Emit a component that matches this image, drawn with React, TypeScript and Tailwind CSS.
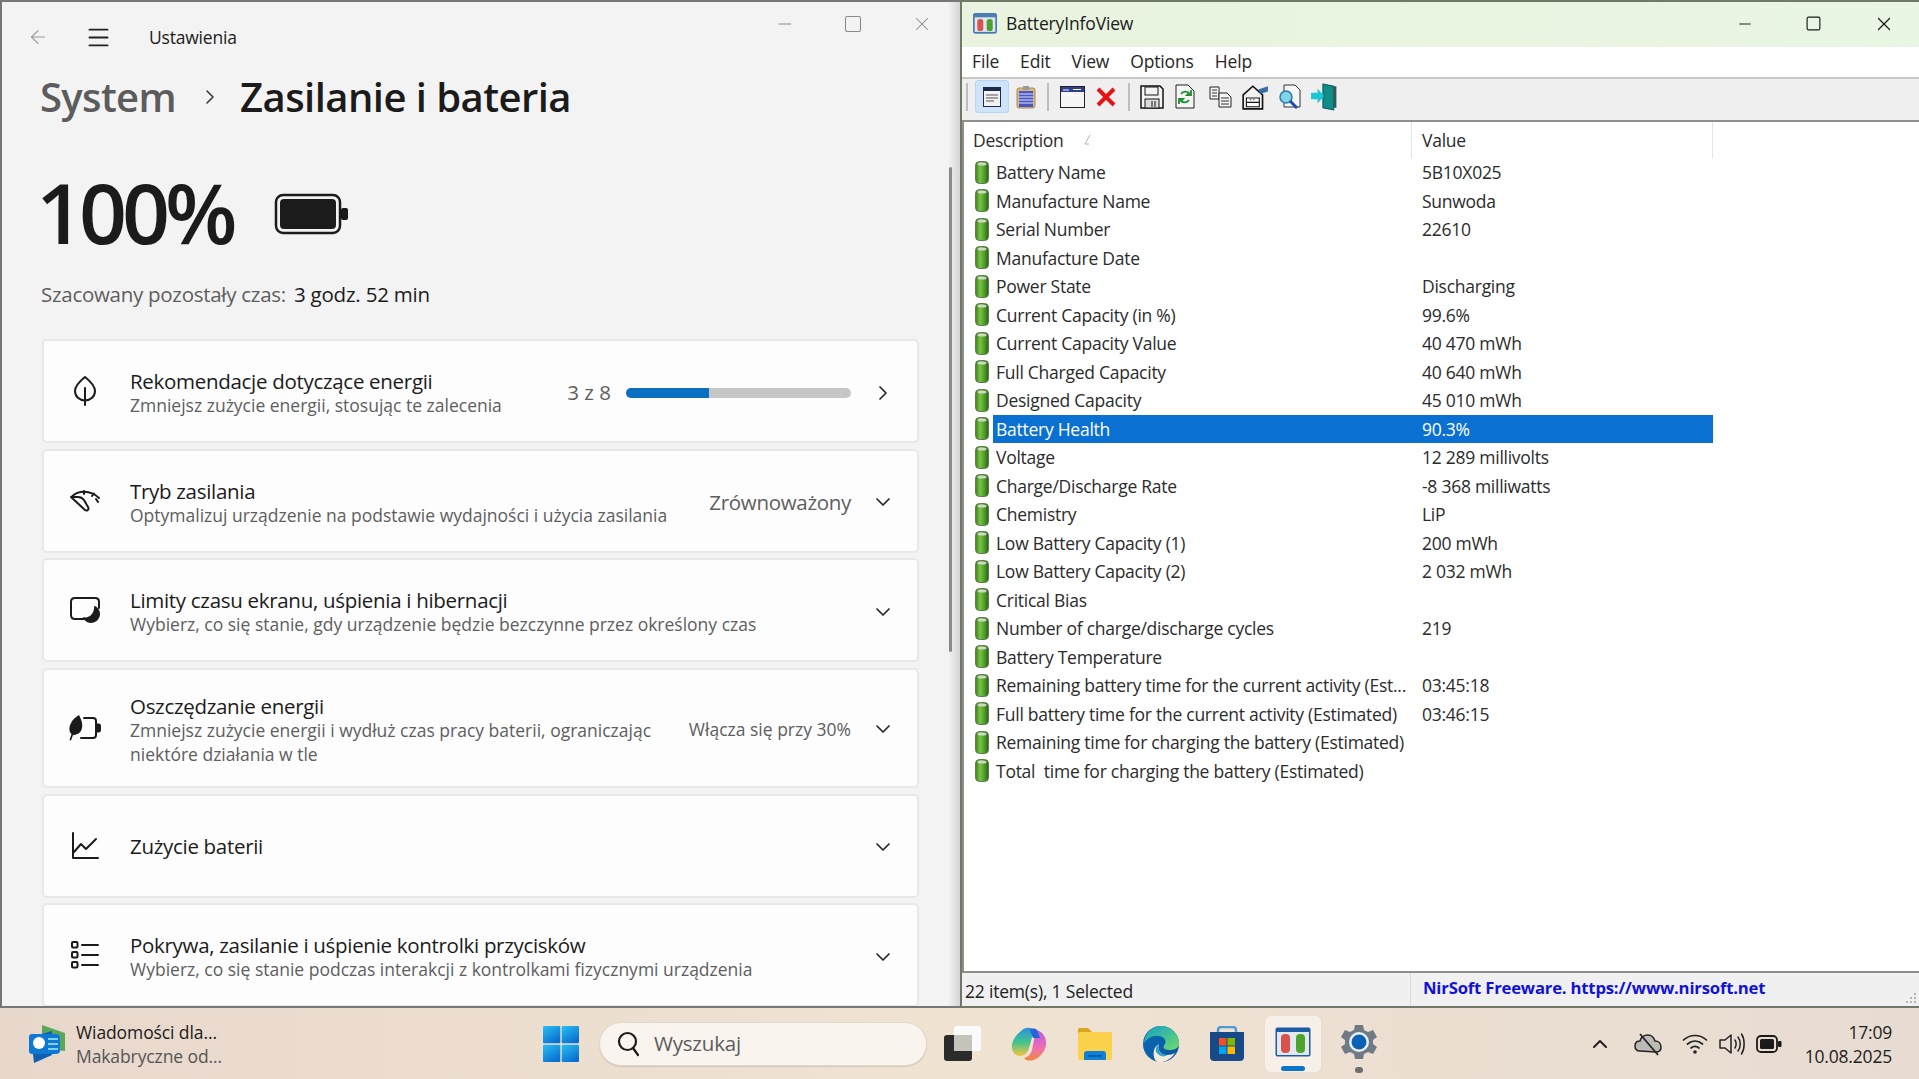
import React from "react";
import { ChevronDown, ChevronRight, ChevronUp, ArrowLeft, Menu, Minus, Square, X } from "lucide-react";

const rows: [string, string][] = [
  ["Battery Name", "5B10X025"],
  ["Manufacture Name", "Sunwoda"],
  ["Serial Number", "22610"],
  ["Manufacture Date", ""],
  ["Power State", "Discharging"],
  ["Current Capacity (in %)", "99.6%"],
  ["Current Capacity Value", "40 470 mWh"],
  ["Full Charged Capacity", "40 640 mWh"],
  ["Designed Capacity", "45 010 mWh"],
  ["Battery Health", "90.3%"],
  ["Voltage", "12 289 millivolts"],
  ["Charge/Discharge Rate", "-8 368 milliwatts"],
  ["Chemistry", "LiP"],
  ["Low Battery Capacity (1)", "200 mWh"],
  ["Low Battery Capacity (2)", "2 032 mWh"],
  ["Critical Bias", ""],
  ["Number of charge/discharge cycles", "219"],
  ["Battery Temperature", ""],
  ["Remaining battery time for the current activity (Est...", "03:45:18"],
  ["Full battery time for the current activity (Estimated)", "03:46:15"],
  ["Remaining time for charging the battery (Estimated)", ""],
  ["Total  time for charging the battery (Estimated)", ""],
];

function GreenCell() {
  return (
    <svg width="16" height="25" viewBox="0 0 16 24">
      <defs>
        <linearGradient id="gc" x1="0" x2="1" y1="0" y2="0">
          <stop offset="0" stopColor="#3d7d1e" />
          <stop offset="0.35" stopColor="#79c441" />
          <stop offset="0.7" stopColor="#4c9a28" />
          <stop offset="1" stopColor="#2c5f18" />
        </linearGradient>
      </defs>
      <rect x="1.5" y="1" width="13" height="22" rx="4" fill="url(#gc)" stroke="#5e7d52" strokeWidth="1" />
      <ellipse cx="8" cy="3.5" rx="4.5" ry="1.6" fill="#cfd8c8" />
    </svg>
  );
}

function Leaf() {
  return (
    <svg width="26" height="32" viewBox="0 0 26 32" fill="none" stroke="#1b1b1b" strokeWidth="2" strokeLinecap="round">
      <path d="M13 2C8 6 3 10.500 3 16C3 21.500 7.500 25.500 13 25.500C18.500 25.500 23 21.500 23 16C23 10.500 18 6 13 2Z" />
      <path d="M13 13V30" />
    </svg>
  );
}
function Gauge() {
  return (
    <svg width="32" height="24" viewBox="0 0 32 24" fill="none" stroke="#1b1b1b" strokeWidth="2" strokeLinecap="round">
      <path d="M3 7.500C9 1.500 21 0.500 30 9" />
      <path d="M15 2V5M25 4.500L23 7M29 13L27 10" />
      <path d="M2 8L16 21C18 22.500 20.500 20.500 19 18L15 11C13.500 9 11 8 9 8Z" strokeLinejoin="round" />
    </svg>
  );
}
function ScreenMoon() {
  return (
    <svg width="32" height="28" viewBox="0 0 32 28" fill="none">
      <path d="M15 23H6C3.500 23 2 21.500 2 19V6C2 3.500 3.500 2 6 2H26C28.500 2 30 3.500 30 6V12" stroke="#1b1b1b" strokeWidth="2" strokeLinecap="round" />
      <path d="M25 10C28 10 31 14 31 18C31 23 26.500 27 22 27C18 27 15 24 14 21C20 23 26 17 25 10Z" fill="#1b1b1b" />
    </svg>
  );
}
function Saver() {
  return (
    <svg width="32" height="26" viewBox="0 0 32 26" fill="none">
      <path d="M15 3H24C26 3 27 4 27 6V20C27 22 26 23 24 23H12" stroke="#1b1b1b" strokeWidth="2" strokeLinecap="round" />
      <path d="M27.500 8.500H30C31 8.500 32 9.500 32 11V15C32 16.500 31 17.500 30 17.500H27.500Z" fill="#1b1b1b" />
      <path d="M10 0C12 4 14 8 13 13C12 18 8 20 4 20L2 25.500L0.500 25L2.500 19C-0.500 16 0 12 2 8C4 4 7 2 10 0Z" fill="#1b1b1b" />
    </svg>
  );
}
function ChartIcon() {
  return (
    <svg width="30" height="28" viewBox="0 0 30 28" fill="none" stroke="#1b1b1b" strokeWidth="2" strokeLinecap="round" strokeLinejoin="round">
      <path d="M3 1V26H28" />
      <path d="M4 20L11 12L16 17L26 7" />
    </svg>
  );
}
function ListIcon() {
  return (
    <svg width="30" height="28" viewBox="0 0 30 28" fill="none" stroke="#1b1b1b" strokeWidth="2" strokeLinecap="round">
      <rect x="2" y="1" width="5.500" height="5.500" rx="1" />
      <rect x="2" y="11" width="5.500" height="5.500" rx="1" />
      <rect x="2" y="21" width="5.500" height="5.500" rx="1" />
      <path d="M12 4H28M12 14H28M12 24H28" />
    </svg>
  );
}

function Card({ icon, title, sub, right, h = "h-[104px]" }: { icon: React.ReactNode; title: string; sub?: React.ReactNode; right?: React.ReactNode; h?: string }) {
  return (
    <div className={`${h} shrink-0 w-[877px] rounded-[5px] bg-[#fdfdfd] border-2 border-[#e8e8e8] flex items-center`}>
      <div className="w-[86px] shrink-0 flex justify-center pr-[5px]">{icon}</div>
      <div className={`flex-1 min-w-0 ${sub ? "pt-[5px]" : ""}`}>
        <div className="text-[20.5px] leading-[24px] text-[#1b1b1b] tracking-[-0.3px] whitespace-nowrap">{title}</div>
        {sub && <div className="text-[17.5px] leading-[24.500px] text-[#5e5e5e] tracking-[0px] whitespace-nowrap">{sub}</div>}
      </div>
      <div className="flex items-center shrink-0 pt-[3px]">{right}</div>
    </div>
  );
}

function Chev({ right = false }: { right?: boolean }) {
  const C = right ? ChevronRight : ChevronDown;
  return (
    <div className="w-[66px] shrink-0 flex justify-center pr-[2px]">
      <C size={24} strokeWidth={1.7} className="text-[#262626]" />
    </div>
  );
}

function SettingsWindow() {
  return (
    <div className="relative w-[960px] h-full shrink-0 bg-[#f3f3f3] border-t-2 border-l-2 border-b-2 border-[#777777] overflow-hidden">
      <div className="absolute right-0 top-0 bottom-0 w-[12px] bg-gradient-to-r from-[#f3f3f3] to-[#d5d5d5]" />
      <div className="absolute left-[947px] top-[165px] w-[3px] h-[485px] rounded-full bg-[#8a8a8a]" />

      <div className="relative h-[64px] pt-[6px] flex items-center text-[#1b1b1b]">
        <ArrowLeft size={22} strokeWidth={1.3} className="text-[#9a9a9a] ml-[25px]" />
        <Menu size={27} strokeWidth={1.7} className="text-[#222222] ml-[35.5px]" />
        <div className="text-[17.5px] tracking-[-0.2px] ml-[37.5px]">Ustawienia</div>
        <div className="ml-auto mr-[27px] mt-[-26px] flex items-center gap-[48px] text-[#8b8b8b]">
          <Minus size={20} strokeWidth={1.2} />
          <Square size={20} strokeWidth={1.3} />
          <X size={22} strokeWidth={1.1} />
        </div>
      </div>

      <div className="relative pl-[38px] h-[64px] pb-[2px] flex items-center">
        <span className="text-[40px] leading-[56px] font-semibold tracking-[-0.65px] text-[#5c5c5c]">System</span>
        <ChevronRight size={24} strokeWidth={1.6} className="text-[#3b3b3b] ml-[22px] mr-[18px]" />
        <span className="text-[40px] leading-[56px] font-semibold tracking-[-0.55px] text-[#1b1b1b]">Zasilanie i bateria</span>
      </div>

      <div className="relative pl-[34px] h-[110px] mt-[27px] flex items-center">
        <span className="text-[84px] leading-[110px] font-semibold tracking-[-5px] text-[#1b1b1b]">100%</span>
        <svg className="ml-[41px] mt-[4px]" width="76" height="42" viewBox="0 0 76 42">
          <rect x="2" y="2" width="64" height="38" rx="7" fill="none" stroke="#1b1b1b" strokeWidth="2.500" />
          <rect x="6" y="6" width="56" height="30" rx="4" fill="#1b1b1b" />
          <rect x="67" y="15" width="7" height="12" rx="2" fill="#1b1b1b" />
        </svg>
      </div>

      <div className="relative pl-[39px] mt-[11px] h-[32px] flex items-center text-[20.5px] tracking-[-0.2px] whitespace-nowrap">
        <span className="text-[#5e5e5e] tracking-[-0.28px]">Szacowany pozostały czas:</span>
        <span className="text-[#1b1b1b] ml-[8px]">3 godz. 52 min</span>
      </div>

      <div className="relative ml-[40px] mt-[29px] flex flex-col gap-[5.500px]">
        <Card
          icon={<Leaf />}
          title="Rekomendacje dotyczące energii"
          sub="Zmniejsz zużycie energii, stosując te zalecenia"
          right={
            <>
              <span className="text-[20.5px] text-[#5e5e5e] mr-[15px]">3 z 8</span>
              <div className="w-[225px] h-[10px] rounded-full bg-[#c6c6c6] overflow-hidden">
                <div className="w-[83px] h-full bg-[#0b6fc2]" />
              </div>
              <Chev right />
            </>
          }
        />
        <Card
          icon={<Gauge />}
          title="Tryb zasilania"
          sub="Optymalizuj urządzenie na podstawie wydajności i użycia zasilania"
          right={
            <>
              <span className="text-[20.5px] text-[#5e5e5e] tracking-[-0.3px]">Zrównoważony</span>
              <Chev />
            </>
          }
        />
        <Card icon={<ScreenMoon />} title="Limity czasu ekranu, uśpienia i hibernacji" sub="Wybierz, co się stanie, gdy urządzenie będzie bezczynne przez określony czas" right={<Chev />} />
        <Card
          h="h-[120.500px]"
          icon={<Saver />}
          title="Oszczędzanie energii"
          sub={<>Zmniejsz zużycie energii i wydłuż czas pracy baterii, ograniczając<br />niektóre działania w tle</>}
          right={
            <>
              <span className="text-[17.5px] text-[#5e5e5e] tracking-[0px]">Włącza się przy 30%</span>
              <Chev />
            </>
          }
        />
        <Card icon={<ChartIcon />} title="Zużycie baterii" right={<Chev />} />
        <Card icon={<ListIcon />} title="Pokrywa, zasilanie i uśpienie kontrolki przycisków" sub="Wybierz, co się stanie podczas interakcji z kontrolkami fizycznymi urządzenia" right={<Chev />} />
      </div>
    </div>
  );
}

function AppIcon({ size = 24 }: { size?: number }) {
  return (
    <svg width={size} height={size * 0.86} viewBox="0 0 28 24">
      <rect x="0.500" y="0.500" width="27" height="23" rx="2" fill="#4b7fb5" stroke="#3a6ea8" />
      <rect x="2" y="5" width="24" height="17" fill="#dfe6ee" />
      <rect x="5" y="7" width="7" height="14" rx="3" fill="#d9534f" />
      <rect x="16" y="7" width="7" height="14" rx="3" fill="#4fa02f" />
    </svg>
  );
}

function Toolbar() {
  return (
    <div className="h-[41px] bg-[#efefef] flex items-center shrink-0 pl-[3px] pb-[6px]">
      <div className="w-[2px] h-[28px] bg-[#bdbdbd] ml-[1px]" />
      <div className="w-[34px] h-[33px] ml-[7px] rounded-[3px] bg-[#cfe4f8] border border-[#b6d6f3] flex items-center justify-center">
        <svg width="18" height="20" viewBox="0 0 18 20"><rect x="0.500" y="0.500" width="17" height="19" fill="#f2f2f2" stroke="#1d2b4a" /><rect x="1" y="1" width="16" height="3" fill="#1d2b4a" /><path d="M3 8H15M3 11H15M3 14H11" stroke="#555" /></svg>
      </div>
      <div className="w-[33px] flex justify-center">
        <svg width="20" height="24" viewBox="0 0 20 24"><rect x="1" y="3" width="18" height="20" rx="2" fill="#d7b77e" stroke="#a98c55" /><rect x="3" y="6" width="14" height="16" fill="#4a56c6" /><path d="M3 9H17M3 12H17M3 15H17M3 18H17" stroke="#dfe3fb" /><rect x="7" y="1" width="6" height="4" fill="#9a9a9a" /></svg>
      </div>
      <div className="w-[2px] h-[28px] bg-[#bdbdbd] ml-[5px]" />
      <div className="w-[46px] flex justify-center">
        <svg width="25" height="22" viewBox="0 0 25 22"><rect x="0.500" y="0.500" width="24" height="21" fill="#f5f5f5" stroke="#222" /><rect x="1" y="1" width="23" height="5" fill="#2d3f8f" /><path d="M3 4H9M13 3.500H21M3 9H21" stroke="#fff" /></svg>
      </div>
      <div className="w-[22px] flex justify-center">
        <svg width="22" height="22" viewBox="0 0 22 22" className="shrink-0"><path d="M3 3L19 19M19 3L3 19" stroke="#e41414" strokeWidth="4" /></svg>
      </div>
      <div className="w-[2px] h-[28px] bg-[#bdbdbd] ml-[11px]" />
      <div className="w-[44px] flex justify-center">
        <svg width="24" height="24" viewBox="0 0 24 24"><path d="M1 1H20L23 4V23H1Z" fill="#f3f3f3" stroke="#151515" strokeWidth="1.500" /><rect x="5" y="2" width="13" height="8" fill="#f3f3f3" stroke="#151515" /><rect x="5" y="14" width="14" height="9" fill="#dcdcdc" stroke="#151515" /><path d="M12 16V22M15 16V22" stroke="#151515" /></svg>
      </div>
      <div className="w-[22px] flex justify-center">
        <svg width="20" height="25" viewBox="0 0 20 25" className="shrink-0"><path d="M1 1H13L19 7V24H1Z" fill="#f6f6f6" stroke="#222" /><path d="M6 10C8 7 12 7 14 9L12 11H16V6M14 16C12 19 8 19 6 17L8 15H4V20" stroke="#1f8f2c" strokeWidth="1.800" fill="none" /></svg>
      </div>
      <div className="w-[50px] flex justify-center">
        <svg width="24" height="22" viewBox="0 0 24 22" className="shrink-0"><path d="M1 1H10V13H1Z" fill="#f5f5f5" stroke="#222" /><path d="M3 4H8M3 7H8M3 10H8" stroke="#333" /><path d="M10 7H18L22 11V21H10Z" fill="#f5f5f5" stroke="#222" /><path d="M12 12H20M12 15H20M12 18H20" stroke="#333" /></svg>
      </div>
      <div className="w-[18px] flex justify-center">
        <svg width="28" height="26" viewBox="0 0 26 24" className="shrink-0"><path d="M2 10L11 2L20 10V23H2Z" fill="#f2f2f2" stroke="#111" strokeWidth="1.500" /><path d="M5 13H17V21H5Z" fill="#fff" stroke="#111" /><path d="M5 17H17M9 14V15M12 14V15" stroke="#111" /><path d="M16 5L25 2V7L18 9Z" fill="#3a6ea8" /></svg>
      </div>
      <div className="w-[52px] flex justify-center">
        <svg width="24" height="26" viewBox="0 0 24 26" className="shrink-0"><path d="M6 1H17L22 6V23H6Z" fill="#f6f6f6" stroke="#333" /><circle cx="8" cy="13" r="6" fill="#7fd4ea" stroke="#2a7aa8" strokeWidth="1.500" /><path d="M12 17L19 24" stroke="#2249b0" strokeWidth="3" /></svg>
      </div>
      <div className="w-[16px] flex justify-center">
        <svg width="28" height="28" viewBox="0 0 26 26" className="shrink-0"><path d="M12 1L22 3V25L12 23Z" fill="#0f8d8a" stroke="#0b5c5a" /><rect x="22" y="3" width="2.500" height="20" fill="#2d5c5a" /><path d="M1 9H7V5L13 12L7 19V15H1Z" fill="#19c7d6" /></svg>
      </div>
    </div>
  );
}

function BatteryWindow() {
  return (
    <div className="flex-1 min-w-0 h-full border-t-2 border-l-2 border-b-2 border-[#707868] flex flex-col">
      <div className="h-[45px] shrink-0 bg-gradient-to-r from-[#e9f3df] to-[#e9f6e3] flex items-center text-[#1b1b1b] pb-[2px]">
        <div className="ml-[11px]"><AppIcon size={24} /></div>
        <div className="ml-[9px] text-[17.5px] tracking-[-0.15px]">BatteryInfoView</div>
        <div className="ml-auto flex items-center mr-[24px] gap-[51px]">
          <Minus size={18} strokeWidth={1.3} />
          <Square size={17} strokeWidth={1.6} />
          <X size={22} strokeWidth={1.3} />
        </div>
      </div>
      <div className="h-[30px] shrink-0 bg-white flex items-center pl-[10px] pb-[2px] text-[17.5px] text-[#262626] gap-[21px] tracking-[-0.15px]">
        <span>File</span><span>Edit</span><span>View</span><span>Options</span><span>Help</span>
      </div>
      <div className="h-[2px] shrink-0 bg-[#c9c9c9]" />
      <Toolbar />
      <div className="h-[2px] shrink-0 bg-[#8e8e8e]" />
      <div className="flex-1 min-h-0 bg-white border-l-2 border-[#8e8e8e] text-[17.5px] text-[#2b2b2b] tracking-[-0.26px] overflow-hidden">
        <div className="h-[36px] flex">
          <div className="w-[448px] flex items-center pl-[9px] border-r border-[#e4e4e4] relative">
            Description
            <svg className="ml-[18px]" width="10" height="12" viewBox="0 0 10 12"><path d="M8 1L3 10H7" stroke="#b5b5b5" fill="none" /></svg>
          </div>
          <div className="w-[301px] flex items-center pl-[10px] border-r border-[#e4e4e4]">Value</div>
        </div>
        {rows.map(([d, v], i) => {
          const selected = i === 9;
          return (
            <div key={d} className="h-[28.500px] flex items-center w-[749px]">
              <div className="w-[29px] pl-[10px] flex items-center shrink-0"><GreenCell /></div>
              <div className={`flex items-center h-full flex-1 ${selected ? "bg-[#0a70d2] text-white" : ""}`}>
                <div className="w-[419px] pl-[3px] whitespace-pre shrink-0">{d}</div>
                <div className="pl-[10px] whitespace-pre">{v}</div>
              </div>
            </div>
          );
        })}
      </div>
      <div className="h-[2px] shrink-0 bg-[#8e8e8e]" />
      <div className="h-[33px] shrink-0 bg-[#f0f0f0] flex items-center relative">
        <div className="w-[449px] pl-[3px] pt-[3px] text-[17.5px] tracking-[-0.2px] text-[#222222] border-r border-[#dcdcdc] h-full flex items-center">22 item(s), 1 Selected</div>
        <div className="pl-[12px] mb-[4px] text-[16.7px] font-bold text-[#1212d8] tracking-[-0.2px]">NirSoft Freeware. https://www.nirsoft.net</div>
        <svg className="absolute right-[2px] bottom-[2px]" width="12" height="12" viewBox="0 0 12 12" fill="#b5b5b5"><rect x="9" y="1" width="2" height="2" /><rect x="5" y="5" width="2" height="2" /><rect x="9" y="5" width="2" height="2" /><rect x="1" y="9" width="2" height="2" /><rect x="5" y="9" width="2" height="2" /><rect x="9" y="9" width="2" height="2" /></svg>
      </div>
    </div>
  );
}

function Slot({ children, active, dot }: { children: React.ReactNode; active?: boolean; dot?: boolean }) {
  return (
    <div className="relative w-[66px] h-full flex items-center justify-center">
      {active && <div className="absolute left-[5px] right-[5px] top-[8px] bottom-[7px] rounded-[6px] bg-[#f7f0e8]" />}
      {active && <div className="absolute left-[21px] right-[21px] bottom-[8px] h-[5px] rounded-full bg-[#0a74cc]" />}
      {dot && <div className="absolute left-[29px] right-[29px] bottom-[6px] h-[6px] rounded-full bg-[#6e6e6e]" />}
      <div className="relative">{children}</div>
    </div>
  );
}

function Taskbar() {
  return (
    <div className="h-[71px] shrink-0 bg-gradient-to-r from-[#e8d8cc] via-[#f0e3d2] to-[#e8dbd2] flex items-center relative font-['Open_Sans',sans-serif]">
      <div className="ml-[28px] w-[40px] shrink-0">
        <svg width="38" height="42" viewBox="0 0 38 42">
          <path d="M14 2L37 10V28L14 26Z" fill="#5aa75a" />
          <path d="M3 14L24 8V32L6 40Z" fill="#0f5fb0" />
          <path d="M1 14C1 12 2 11 4 11H28C30 11 32 12 32 14V28C32 30 30 31 28 31H4C2 31 1 30 1 28Z" fill="#0f78d4" />
          <circle cx="11" cy="20" r="6" fill="#ffffff" />
          <path d="M20 16H30M20 21H30M20 26H30" stroke="#7fd0f5" strokeWidth="2.200" />
        </svg>
      </div>
      <div className="ml-[8px] w-[150px] shrink-0 text-[17.500px] leading-[24px] tracking-[-0.1px]">
        <div className="text-[#1b1b1b]">Wiadomości dla...</div>
        <div className="text-[#555555]">Makabryczne od...</div>
      </div>
      <div className="ml-[317px] w-[38px] shrink-0">
        <svg width="36" height="36" viewBox="0 0 36 36">
          <defs><linearGradient id="ws" x1="0" y1="0" x2="0.6" y2="1"><stop offset="0" stopColor="#28c0f2" /><stop offset="1" stopColor="#0a70d0" /></linearGradient></defs>
          <rect x="0" y="0" width="17.300" height="17.300" rx="1" fill="url(#ws)" />
          <rect x="18.700" y="0" width="17.300" height="17.300" rx="1" fill="url(#ws)" />
          <rect x="0" y="18.700" width="17.300" height="17.300" rx="1" fill="url(#ws)" />
          <rect x="18.700" y="18.700" width="17.300" height="17.300" rx="1" fill="url(#ws)" />
        </svg>
      </div>
      <div className="ml-[18px] w-[328px] h-[44px] shrink-0 rounded-full bg-[#f9f5ee] border border-[#e2d9cd] shadow-[0_1px_1px_rgba(0,0,0,0.12)] flex items-center pl-[17px]">
        <svg width="24" height="26" viewBox="0 0 24 26" fill="none" stroke="#1c1c1c" strokeWidth="2.200" strokeLinecap="round"><circle cx="10.500" cy="10.500" r="8.500" /><path d="M16 17L21 24" /></svg>
        <span className="ml-[13px] text-[20.5px] text-[#5c5c5c] tracking-[-0.2px]">Wyszukaj</span>
      </div>
      <div className="ml-[3px] flex h-full shrink-0">
        <Slot>
          <svg width="38" height="36" viewBox="0 0 38 36">
            <rect x="10" y="0" width="27" height="25" rx="3" fill="#fbfbfb" />
            <rect x="0" y="9" width="28" height="26" rx="3" fill="#2b2b2b" />
            <rect x="10" y="9" width="18" height="16" fill="#c6c5bc" />
          </svg>
        </Slot>
        <Slot>
          <svg width="36" height="36" viewBox="0 0 36 36">
            <defs>
              <linearGradient id="c1" x1="0" y1="0" x2="0" y2="1"><stop offset="0" stopColor="#2c8fe0" /><stop offset="0.5" stopColor="#3fc48f" /><stop offset="1" stopColor="#f5c53f" /></linearGradient>
              <linearGradient id="c2" x1="0" y1="0" x2="0" y2="1"><stop offset="0" stopColor="#b85ae6" /><stop offset="0.6" stopColor="#ef6fb0" /><stop offset="1" stopColor="#f08a3c" /></linearGradient>
            </defs>
            <path d="M10 5C14 1 20 1 23 4L18 22C16 28 13 30 9 30C3 30 0 24 1 18C2 13 5 9 10 5Z" fill="url(#c1)" />
            <path d="M25 4C31 5 36 11 35 19C34 26 29 31 23 34C19 35 15 35 13 32C17 31 20 28 21 24Z" fill="url(#c2)" />
            <path d="M19 4C21 2 24 2 26 4L29 12L22 12Z" fill="#2563d8" />
          </svg>
        </Slot>
        <Slot>
          <svg width="36" height="34" viewBox="0 0 36 34">
            <path d="M1 3C1 1.500 2 1 3 1H11L15 5H33C34.500 5 35 6 35 7V10H1Z" fill="#d9a520" />
            <rect x="1" y="5" width="34" height="28" rx="2" fill="#fad24b" />
            <path d="M7 33V27C7 25 8 24 10 24H26C28 24 29 25 29 27V33Z" fill="#0f7fd8" />
            <rect x="11" y="28" width="14" height="2" fill="#0b5eaa" />
          </svg>
        </Slot>
        <Slot>
          <svg width="38" height="38" viewBox="0 0 38 38">
            <defs>
              <linearGradient id="e1" x1="0" y1="0" x2="1" y2="1"><stop offset="0" stopColor="#14a0c8" /><stop offset="1" stopColor="#6fdc6a" /></linearGradient>
              <linearGradient id="e2" x1="0" y1="0" x2="1" y2="1"><stop offset="0" stopColor="#0a6fb4" /><stop offset="1" stopColor="#0b4fa0" /></linearGradient>
            </defs>
            <circle cx="19" cy="19" r="18" fill="url(#e2)" />
            <path d="M2 18C3 7 11 1 19 1C29 1 37 9 37 18C37 24 32 25 27 25C22 25 20 22 23 19C24 17 24 12 17 11C10 10 5 14 2 18Z" fill="url(#e1)" />
            <path d="M17 19C15 24 18 30 25 30C28 30 31 29 33 28C29 34 23 38 16 37C12 36 11 30 12 25C13 22 15 20 17 19Z" fill="#f4ead8" />
            <path d="M17 19C15 24 18 30 25 30C22 33 17 31 14 27C13 24 15 20 17 19Z" fill="#2aa4c9" />
          </svg>
        </Slot>
        <Slot>
          <svg width="36" height="36" viewBox="0 0 36 36">
            <path d="M9 8V4C9 2 10 1 12 1H24C26 1 27 2 27 4V8" fill="none" stroke="#4a9bd8" strokeWidth="2.500" />
            <path d="M1 6H35V31C35 33.500 33.500 35 31 35H5C2.500 35 1 33.500 1 31Z" fill="#174a86" />
            <rect x="10" y="12" width="7.500" height="7.500" fill="#f04f28" />
            <rect x="18.500" y="12" width="7.500" height="7.500" fill="#7fba00" />
            <rect x="10" y="20.500" width="7.500" height="7.500" fill="#00a4ef" />
            <rect x="18.500" y="20.500" width="7.500" height="7.500" fill="#ffb900" />
          </svg>
        </Slot>
        <Slot active>
          <svg width="36" height="30" viewBox="0 0 36 30" className="mb-[4px]">
            <rect x="0.500" y="0.500" width="35" height="29" rx="2" fill="#1d5ca6" />
            <rect x="2" y="5" width="32" height="23" fill="#e2e8ee" />
            <rect x="6" y="7" width="9" height="19" rx="4" fill="#d8524e" />
            <rect x="21" y="7" width="9" height="19" rx="4" fill="#4ea32f" />
          </svg>
        </Slot>
        <Slot dot>
          <svg width="36" height="36" viewBox="0 0 36 36" className="mb-[3px]">
            <path d="M14 1H22L23 6L27 8L32 6L36 13L32 16V20L36 23L32 30L27 28L23 30L22 35H14L13 30L9 28L4 30L0 23L4 20V16L0 13L4 6L9 8L13 6Z" fill="#6f7a84" />
            <circle cx="18" cy="18" r="10" fill="#eaf0f6" />
            <circle cx="18" cy="18" r="7.500" fill="#0a62b4" />
          </svg>
        </Slot>
      </div>
      <div className="ml-auto flex items-center shrink-0 pr-[27px]">
        <ChevronUp size={24} strokeWidth={2} className="text-[#222222] mr-[22px]" />
        <svg width="28" height="24" viewBox="0 0 28 24" className="mr-[20px]">
          <path d="M6 19C2 19 1 16 1 14C1 11 3 9 6 9C7 5 10 3 14 3C18 3 20 6 21 9C24 9 27 11 27 15C27 18 25 20 22 20Z" fill="#bdbbb5" stroke="#222" strokeWidth="1.500" />
          <path d="M6 2L24 23" stroke="#222" strokeWidth="1.800" />
        </svg>
        <svg width="26" height="22" viewBox="0 0 26 22" fill="none" stroke="#222" strokeWidth="1.700" strokeLinecap="round" className="mr-[11px]">
          <path d="M1.500 7C8 1 18 1 24.500 7M5.500 11C10 7 16 7 20.500 11M9 15C11.500 13 14.500 13 17 15" />
          <circle cx="13" cy="19" r="1.800" fill="#222" stroke="none" />
        </svg>
        <svg width="26" height="24" viewBox="0 0 26 24" fill="none" stroke="#222" strokeWidth="1.500" strokeLinecap="round" strokeLinejoin="round" className="mr-[11px]">
          <path d="M1 8H6L12 3V21L6 16H1Z" />
          <path d="M16 8C17.500 10 17.500 14 16 16M19 5C22 9 22 15 19 19M22.500 2C26 7 26 17 22.500 22" />
        </svg>
        <svg width="26" height="18" viewBox="0 0 26 18" className="mr-[23px]">
          <rect x="1" y="1" width="20" height="16" rx="4" fill="none" stroke="#1b1b1b" strokeWidth="1.800" />
          <rect x="4" y="4" width="14" height="10" rx="1.500" fill="#1b1b1b" />
          <rect x="22" y="6" width="3.500" height="6" rx="1" fill="#1b1b1b" />
        </svg>
        <div className="text-right text-[#222222] text-[17.500px] leading-[24px] tracking-[-0.2px]">
          <div>17:09</div>
          <div>10.08.2025</div>
        </div>
      </div>
    </div>
  );
}

export default function App() {
  return (
    <div className="w-[1919px] h-[1079px] overflow-hidden flex flex-col bg-[#eadfd3] font-['Open_Sans',sans-serif]">
      <div className="h-[1008px] flex shrink-0">
        <SettingsWindow />
        <BatteryWindow />
      </div>
      <Taskbar />
    </div>
  );
}
